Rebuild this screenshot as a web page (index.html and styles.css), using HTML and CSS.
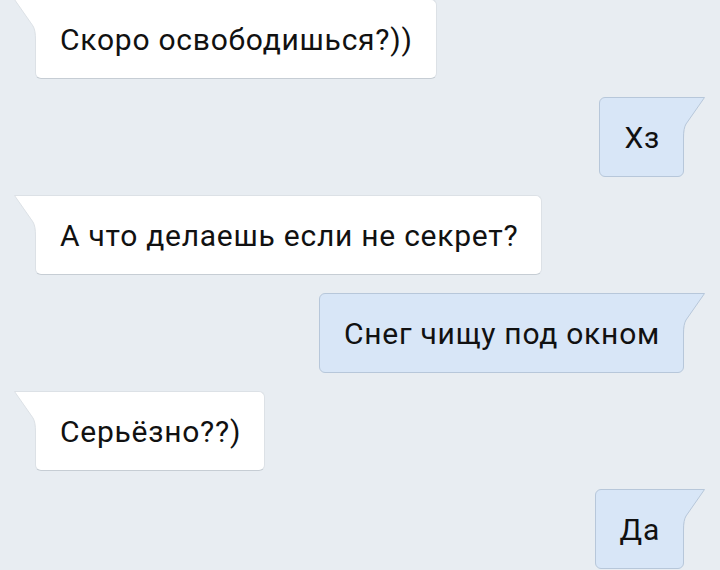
FILE: index.html
```html
<!DOCTYPE html>
<html lang="ru">
<head>
  <meta charset="UTF-8">
  <meta name="viewport" content="width=device-width, initial-scale=1.0">
  <title>Переписка</title>
  <link rel="stylesheet" href="styles.css">
</head>
<body>
  <div class="chat">
    <div class="msg in">
      <svg class="tail" width="25" height="41" viewBox="0 0 25 41"><path class="tail-fill" d="M0.5 0.5 L19 27 Q21.5 31 21.5 41 L25 41 L25 0.5 Z"/><path class="tail-line" d="M25 0.5 H0.5 L19 27 Q21.5 31 21.5 41"/></svg>
      Скоро освободишься?))
    </div>
    <div class="msg out">
      <svg class="tail" width="25" height="41" viewBox="0 0 25 41"><path class="tail-fill" d="M24.5 0.5 L6 27 Q3.5 31 3.5 41 L0 41 L0 0.5 Z"/><path class="tail-line" d="M0 0.5 H24.5 L6 27 Q3.5 31 3.5 41"/></svg>
      Хз
    </div>
    <div class="msg in">
      <svg class="tail" width="25" height="41" viewBox="0 0 25 41"><path class="tail-fill" d="M0.5 0.5 L19 27 Q21.5 31 21.5 41 L25 41 L25 0.5 Z"/><path class="tail-line" d="M25 0.5 H0.5 L19 27 Q21.5 31 21.5 41"/></svg>
      А что делаешь если не секрет?
    </div>
    <div class="msg out">
      <svg class="tail" width="25" height="41" viewBox="0 0 25 41"><path class="tail-fill" d="M24.5 0.5 L6 27 Q3.5 31 3.5 41 L0 41 L0 0.5 Z"/><path class="tail-line" d="M0 0.5 H24.5 L6 27 Q3.5 31 3.5 41"/></svg>
      Снег чищу под окном
    </div>
    <div class="msg in">
      <svg class="tail" width="25" height="41" viewBox="0 0 25 41"><path class="tail-fill" d="M0.5 0.5 L19 27 Q21.5 31 21.5 41 L25 41 L25 0.5 Z"/><path class="tail-line" d="M25 0.5 H0.5 L19 27 Q21.5 31 21.5 41"/></svg>
      Серьёзно??)
    </div>
    <div class="msg out">
      <svg class="tail" width="25" height="41" viewBox="0 0 25 41"><path class="tail-fill" d="M24.5 0.5 L6 27 Q3.5 31 3.5 41 L0 41 L0 0.5 Z"/><path class="tail-line" d="M0 0.5 H24.5 L6 27 Q3.5 31 3.5 41"/></svg>
      Да
    </div>
  </div>
</body>
</html>
```

FILE: styles.css
```css
body {
  margin: 0;
  background-color: #e8edf2;
  font-family: Roboto, "Noto Sans", sans-serif;
  color: #111;
  overflow: hidden;
}
.chat {
  display: flex;
  flex-direction: column;
  gap: 18px;
  margin-top: -1px;
  padding: 0 36px 0 35px;
}
.msg {
  position: relative;
  height: 80px;
  box-sizing: border-box;
  display: flex;
  align-items: center;
  padding: 0 23px 0 24px;
  font-size: 30px;
  letter-spacing: 0.75px;
  border: 1px solid;
  border-radius: 6px;
}
.msg.in {
  align-self: flex-start;
  background: #fff;
  border-color: #dce1e6;
  border-bottom-color: #c6cdd4;
  border-top-left-radius: 0;
}
.msg.out {
  align-self: flex-end;
  background: #d8e6f7;
  border-color: #b7c7da;
  border-top-right-radius: 0;
}
.tail {
  position: absolute;
  top: -1px;
  display: block;
}
.msg.in .tail {
  left: -22px;
}
.msg.out .tail {
  right: -22px;
}
.tail-line {
  fill: none;
  stroke-width: 1;
}
.msg.in .tail-fill {
  fill: #fff;
}
.msg.in .tail-line {
  stroke: #dce1e6;
}
.msg.out .tail-fill {
  fill: #d8e6f7;
}
.msg.out .tail-line {
  stroke: #b7c7da;
}
```
